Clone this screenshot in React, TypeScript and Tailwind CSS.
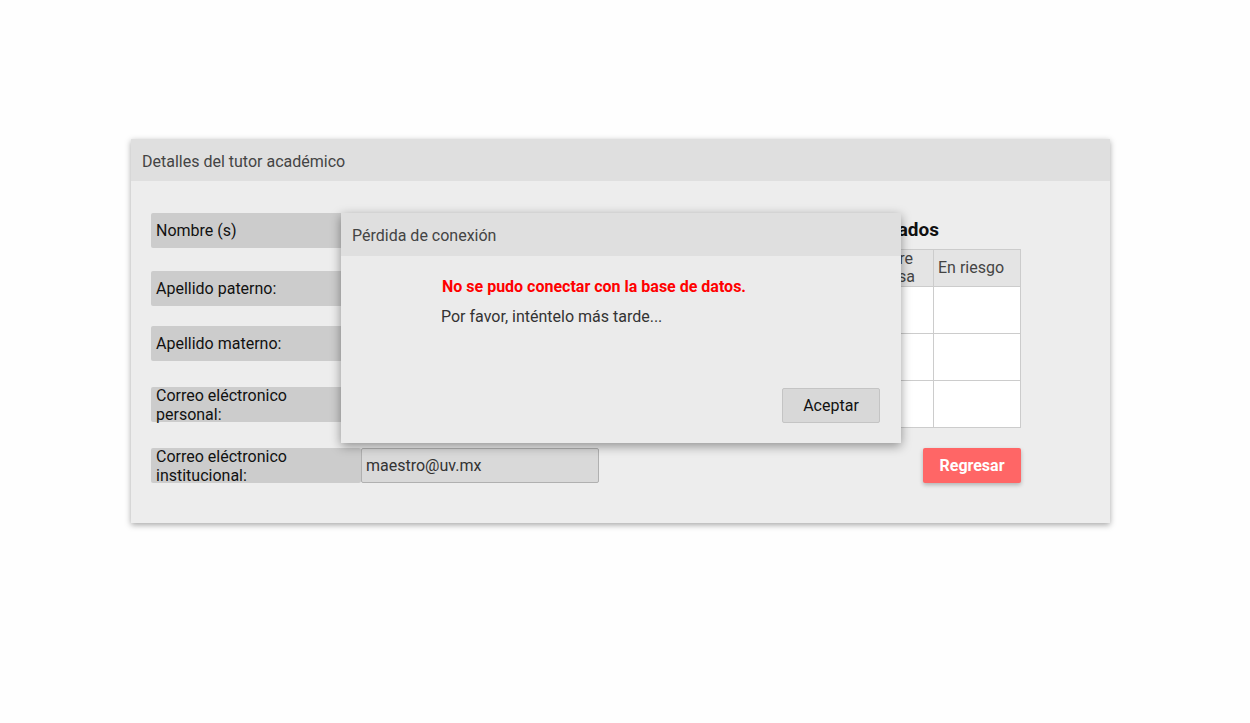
const campos = [
  { label: 'Nombre (s)', value: '', mt: 'mt-0' },
  { label: 'Apellido paterno:', value: '', mt: 'mt-[23px]' },
  { label: 'Apellido materno:', value: '', mt: 'mt-[20px]' },
  { label: 'Correo eléctronico personal:', value: '', mt: 'mt-[26px]' },
  { label: 'Correo eléctronico institucional:', value: 'maestro@uv.mx', mt: 'mt-[26px]' },
];

const filas = [0, 1, 2];

const App = () => {
  return (
    <div className="min-h-[723px] w-full bg-[#fefefe] pt-[139px] font-['Roboto','Noto_Sans',sans-serif]">
      <div className="relative ml-[131px] w-[979px] bg-[#ededed] shadow-[0_2px_6px_rgba(0,0,0,0.35)]">
        <div className="flex h-[42px] items-center bg-[#dfdfdf] px-[11px] pt-[3px] text-[16px] text-[#444]">
          Detalles del tutor académico
        </div>

        <div className="flex justify-between pb-[40px] pl-[20px] pr-[89px] pt-[32px]">
          <div className="flex flex-col">
            {campos.map((c) => (
              <div key={c.label} className={`flex h-[35px] ${c.mt}`}>
                <div className="flex w-[210px] items-center rounded-[2px] bg-[#cccccc] px-[5px] text-[16px] leading-[19px] text-[#111]">
                  {c.label}
                </div>
                <input
                  readOnly
                  value={c.value}
                  className="h-[35px] w-[238px] rounded-[2px] border border-[#b0b0b0] bg-[#d9d9d9] px-[4px] text-[16px] text-[#333] outline-none"
                />
              </div>
            ))}
          </div>

          <div className="flex w-[400px] flex-col items-end">
            <h2 className="mt-[6px] w-full pr-[82px] text-right text-[19px] font-bold leading-[22px] text-[#111]">
              Tutorados
            </h2>
            <table className="mt-[8px] w-full border-collapse text-[16px] text-[#444]">
              <thead>
                <tr className="h-[36px] bg-[#e4e4e4]">
                  <th className="border border-[#cccccc] px-[4px] text-left font-normal leading-[18px]">Matrícula</th>
                  <th className="border border-[#cccccc] px-[4px] text-left font-normal leading-[18px]">Nombre</th>
                  <th className="w-[66px] border border-[#cccccc] pl-[4px] pr-[18px] text-left font-normal leading-[18px]">
                    Sobre
                    <br />
                    pausa
                  </th>
                  <th className="w-[87px] border border-[#cccccc] px-[4px] text-left font-normal leading-[18px]">En riesgo</th>
                </tr>
              </thead>
              <tbody>
                {filas.map((f) => (
                  <tr key={f} className="h-[47px] bg-white">
                    <td className="border border-[#cccccc]" />
                    <td className="border border-[#cccccc]" />
                    <td className="border border-[#cccccc]" />
                    <td className="border border-[#cccccc]" />
                  </tr>
                ))}
              </tbody>
            </table>
            <button className="mt-[20px] h-[35px] w-[98px] rounded-[2px] bg-[#ff6666] text-[16px] font-bold text-white shadow-[0_2px_4px_rgba(0,0,0,0.25)]">
              Regresar
            </button>
          </div>
        </div>

        {/* Diálogo de error */}
        <div className="absolute left-[210px] top-[74px] w-[560px] bg-[#ebebeb] shadow-[0_3px_10px_rgba(0,0,0,0.4)]">
          <div className="flex h-[43px] items-center bg-[#dfdfdf] px-[11px] pt-[3px] text-[16px] text-[#444]">
            Pérdida de conexión
          </div>
          <div className="h-[187px] px-[21px] pt-[21px]">
            <p className="pl-[80px] text-[16px] font-bold leading-[19px] text-[#ff0000]">
              No se pudo conectar con la base de datos.
            </p>
            <p className="mt-[11px] pl-[79px] text-[16px] leading-[19px] text-[#333]">
              Por favor, inténtelo más tarde...
            </p>
            <div className="mt-[62px] flex justify-end">
              <button className="h-[35px] w-[98px] rounded-[2px] border border-[#c4c4c4] bg-[#d8d8d8] text-[16px] text-[#111]">
                Aceptar
              </button>
            </div>
          </div>
        </div>
      </div>
    </div>
  );
};

export default App;
